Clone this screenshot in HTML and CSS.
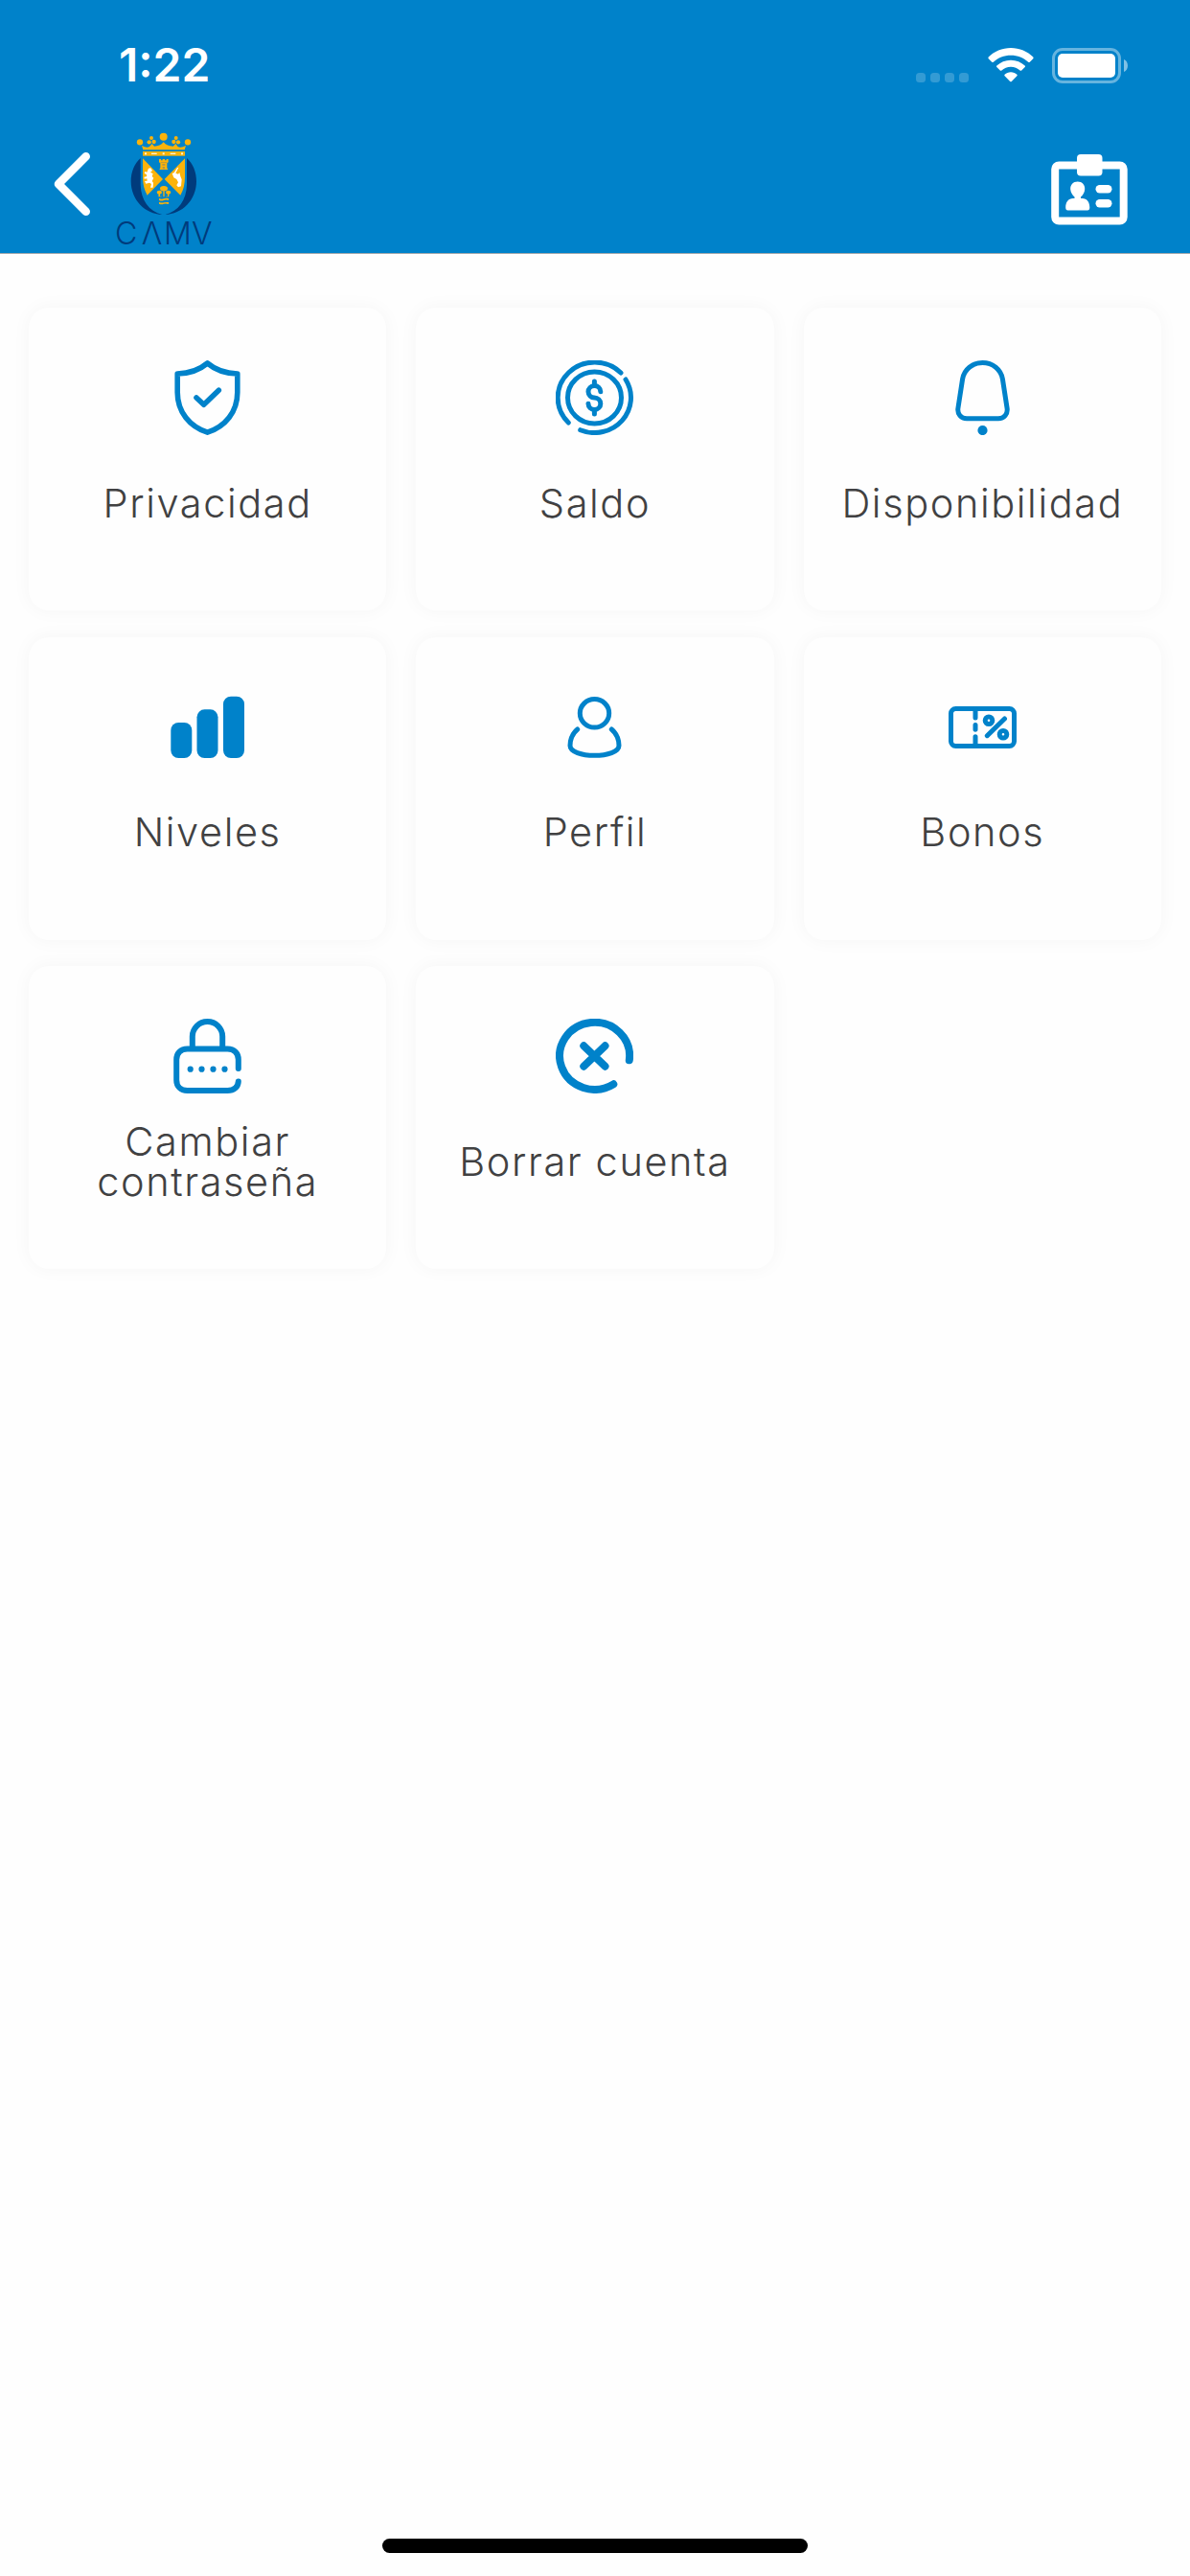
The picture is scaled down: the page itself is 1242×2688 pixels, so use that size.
FILE: index.html
```html
<!DOCTYPE html>
<html lang="es">
<head>
    <meta charset="UTF-8">
    <meta name="viewport" content="width=device-width, initial-scale=1.0">
    <title>CAMV</title>
    <link rel="stylesheet" href="styles.css">
</head>
<body>
    <header class="header">
        <div class="status-bar">
            <span class="time">1:22</span>
            <div class="status-icons">
                <div class="signal">
                    <span></span><span></span><span></span><span></span>
                </div>
                <svg class="wifi" viewBox="0 0 48 36" fill="#fff">
                    <path d="M24 0C33 0 41.500 3.600 47.300 9.600Q48 10.400 47.300 11.200L43.800 14.700Q43 15.400 42.200 14.700C37.300 10.200 31 7.700 24 7.700S10.700 10.200 5.800 14.700Q5 15.400 4.200 14.700L.7 11.200Q0 10.400.7 9.600C6.500 3.600 15 0 24 0Z"/>
                    <path d="M24 12.700C29.700 12.700 34.900 14.900 38.700 18.500Q39.500 19.300 38.700 20.100L35.200 23.500Q34.400 24.200 33.600 23.500C31 21.200 27.700 19.800 24 19.800S17 21.200 14.400 23.500Q13.600 24.200 12.800 23.500L9.300 20.100Q8.500 19.300 9.300 18.500C13.100 14.900 18.300 12.700 24 12.700Z"/>
                    <path d="M24 25.300C26.500 25.300 28.700 26.200 30.400 27.700Q31.200 28.500 30.400 29.300L24.800 35Q24 35.700 23.200 35L17.600 29.300Q16.800 28.500 17.600 27.700C19.300 26.200 21.500 25.300 24 25.300Z"/>
                </svg>
                <svg class="battery" viewBox="0 0 80 37">
                    <rect x="1.500" y="1.500" width="69" height="34" rx="9.500" fill="none" stroke="#fff" stroke-width="3" opacity=".4"/>
                    <rect x="6" y="6" width="60" height="25" rx="5" fill="#fff"/>
                    <path d="M75 12C80.300 14 80.300 23 75 25Z" fill="#fff" opacity=".5"/>
                </svg>
            </div>
        </div>

        <div class="nav-bar">
            <svg class="back" viewBox="0 0 38 66">
                <path d="M33.700 4.300L5 33L33.700 61.700" fill="none" stroke="#fff" stroke-width="8.600" stroke-linecap="round" stroke-linejoin="round"/>
            </svg>

            <svg class="logo" viewBox="60 20 312 366">
                <!-- corona -->
                <g fill="#fbb30a">
                    <circle cx="212" cy="40" r="12"/>
                    <circle cx="138" cy="57" r="9.500"/>
                    <circle cx="288" cy="57" r="9.500"/>
                    <circle cx="174" cy="44" r="6"/>
                    <circle cx="167" cy="57" r="6.500"/>
                    <circle cx="182" cy="56" r="6.500"/>
                    <circle cx="251" cy="44" r="6"/>
                    <circle cx="244" cy="56" r="6.500"/>
                    <circle cx="258" cy="57" r="6.500"/>
                    <path d="M144 68Q160 76 168 71L176 62L183 70Q201 70 212 57Q223 70 242 70L250 62L257 71Q266 76 282 68L278 81H148Z"/>
                    <rect x="147" y="86" width="132" height="14"/>
                </g>
                <g fill="#fff3d6">
                    <rect x="153" y="90" width="6" height="6"/>
                    <rect x="174" y="91" width="17" height="4"/>
                    <rect x="209" y="90" width="6" height="6"/>
                    <rect x="233" y="91" width="17" height="4"/>
                    <rect x="267" y="90" width="6" height="6"/>
                </g>
                <!-- laureles -->
                <path d="M140 107V190C142 240 165 271 208 284C155 283 110 238 110 180C110 150 121 124 140 107Z" fill="#003b7c"/>
                <path d="M285 107V190C283 240 260 271 217 284C270 283 315 238 315 180C315 150 304 124 285 107Z" fill="#003b7c"/>
                <!-- escudo -->
                <path d="M147 108L210 173L161 223Q147 200 147 165Z" fill="#fbb30a"/>
                <path d="M279 108L215 173L265 223Q279 200 279 165Z" fill="#fbb30a"/>
                <g fill="#fff">
                    <path d="M165 139L172 138L177 146L171 151L179 156L176 164L181 169L176 179L180 184L179 199H171L174 188L168 184L157 187L153 179L161 178L160 171L152 172L151 166L160 164L158 157L152 155L154 149L160 151Z"/>
                    <path d="M239 155L245 153L255 137L259 136L250 154L258 157L262 152L265 164L269 174L267 195L258 198L253 192L258 183L253 173L244 168Z"/>
                </g>
                <path d="M198 110H204V114H209V110H216V114H221V110H227V120L223 123V138L226 143H199L202 138V123L198 120Z" fill="#fbb30a"/>
                <path d="M208 125H217V130H208ZM209 134H216V141H209ZM203 119H222V121H203Z" fill="#b19743"/>
                <g fill="#fbb30a">
                    <ellipse cx="213" cy="202" rx="12" ry="8"/>
                    <ellipse cx="199" cy="214" rx="8" ry="6"/>
                    <ellipse cx="227" cy="214" rx="8" ry="6"/>
                    <path d="M211 207H215V228H211ZM197 216H201V226H206V228H196ZM225 216H229V228H219V226H225Z"/>
                    <path d="M198 233Q206 237 213 234Q220 231 228 233V239Q220 236 213 239Q206 242 198 239ZM198 244Q206 248 213 246Q220 244 228 245V251Q220 248 213 250Q206 253 198 250Z"/>
                </g>
                <text class="logo-text" x="60 143 213 300" y="377">CΛMV</text>
            </svg>

            <svg class="badge" viewBox="0 0 80 74">
                <rect x="4.200" y="11.500" width="71.500" height="58" rx="4" fill="none" stroke="#fff" stroke-width="8"/>
                <g fill="#fff">
                    <rect x="27" y="0" width="26.500" height="22.500" rx="4"/>
                    <path d="M27.700 28.500C32.500 28.500 35.500 32 35.200 36.500C35 40 33.200 42.500 31 44.500V46H32.500C37.500 46 40.300 50 40.300 55.500Q40.300 58.500 38 58.500H17.500Q15.200 58.500 15.200 55.500C15.200 50 18 46 23 46H24.500V44.500C22.300 42.500 20.500 40 20.200 36.500C20 32 23 28.500 27.700 28.500Z"/>
                    <rect x="46.500" y="32" width="17" height="8.500" rx="4.200"/>
                    <rect x="46.500" y="47" width="17" height="8.500" rx="4.200"/>
                </g>
            </svg>
        </div>
    </header>

    <main class="menu">
        <a class="card">
            <svg class="icon" viewBox="0 0 81 78">
                <path stroke-width="5.600" d="M40.500 3C31 11 21.500 13.700 9.200 14V33.500C9.200 54 22 69 40.500 75.200C59 69 71.800 54 71.800 33.500V14C59.500 13.700 50 11 40.500 3Z"/>
                <path stroke-width="5.600" d="M29 39L36.700 46.300L52.300 31.300"/>
            </svg>
            <span class="label">Privacidad</span>
        </a>
        <a class="card">
            <svg class="icon" viewBox="0 0 81 78">
                <path d="M13.300 65A38.100 36.600 0 0 1 68 13"/>
                <path d="M73 20A38.100 36.600 0 0 1 25.700 72.700"/>
                <ellipse cx="40.500" cy="39" rx="28" ry="27"/>
                <path d="M46.800 32.700A6.400 6.200 0 1 0 40.400 39A6.400 6.200 0 1 1 34 45.300M40.400 22V26.500M40.400 51.500V56"/>
            </svg>
            <span class="label">Saldo</span>
        </a>
        <a class="card">
            <svg class="icon" viewBox="0 0 81 78">
                <path d="M19.600 19.500C21.300 9.500 30 2.500 40.500 2.500S59.700 9.500 61.400 19.500L66.100 50C67 56 63 60.700 57 60.700H24C18 60.700 14 56 14.900 50Z"/>
                <circle class="solid" cx="40.500" cy="73" r="5.100"/>
            </svg>
            <span class="label">Disponibilidad</span>
        </a>
        <a class="card">
            <svg class="icon" viewBox="0 0 81 78">
                <rect class="solid" x="2.300" y="34" width="22" height="37" rx="8"/>
                <rect class="solid" x="29.500" y="20.300" width="22" height="50.700" rx="8"/>
                <rect class="solid" x="57" y="6.700" width="22" height="64.300" rx="8"/>
            </svg>
            <span class="label">Niveles</span>
        </a>
        <a class="card">
            <svg class="icon" viewBox="0 0 81 78">
                <ellipse cx="40.500" cy="24.300" rx="15.200" ry="14.800"/>
                <path d="M22.700 41C18 45 15 51.500 15 58C15 64.500 27 68.300 40.500 68.300S66 64.500 66 58C66 51.500 63 45 58.300 41"/>
            </svg>
            <span class="label">Perfil</span>
        </a>
        <a class="card">
            <svg class="icon" viewBox="0 0 81 78">
                <rect x="7.500" y="19.500" width="66" height="39" rx="5"/>
                <path d="M33 20V29M33 36.500V41.200M33 48.800V58"/>
                <circle cx="47" cy="31.700" r="3.800"/>
                <circle cx="62" cy="46.300" r="3.800"/>
                <path d="M63.500 30L45.300 47.700"/>
            </svg>
            <span class="label">Bonos</span>
        </a>
        <a class="card">
            <svg class="icon" viewBox="0 0 81 78">
                <path stroke-width="6" d="M72.800 52V42.500C72.800 36 68.500 31.400 61.500 31.400H19.500C12.500 31.400 8.200 36 8.200 42.500V64C8.200 70.500 12.500 75 19.500 75H61.500C68 75 72.500 71.500 72.800 65.500M24.800 30V18.500A15.700 15.500 0 0 1 56.200 18.500V30"/>
                <circle class="solid" cx="22.700" cy="52.700" r="3.100"/>
                <circle class="solid" cx="34.500" cy="52.700" r="3.100"/>
                <circle class="solid" cx="46.500" cy="52.700" r="3.100"/>
                <circle class="solid" cx="58.500" cy="52.700" r="3.100"/>
            </svg>
            <span class="label">Cambiar contraseña</span>
        </a>
        <a class="card">
            <svg class="icon icon-bold" viewBox="0 0 81 78">
                <path d="M76.800 43.300A36.500 35 0 1 0 60.300 68.300"/>
                <path d="M29.300 28.300L51.500 49.700M51.500 28.300L29.300 49.700"/>
            </svg>
            <span class="label">Borrar cuenta</span>
        </a>
    </main>

    <div class="home-indicator"></div>
</body>
</html>
```
FILE: styles.css
```css
* {
    box-sizing: border-box;
}

body {
    margin: 0;
    min-height: 2688px;
    display: flex;
    flex-direction: column;
    background-color: #fefefe;
    font-family: "Inter", sans-serif;
    color: #414142;
}

svg {
    display: block;
    flex: none;
}

.header {
    height: 265px;
    background-color: #0082ca;
    border-bottom: 1px solid #a3a9ad;
}

/* Barra de estado */
.status-bar {
    height: 136px;
    padding: 0 64px 0 124px;
    display: flex;
    justify-content: space-between;
    align-items: center;
}

.time {
    color: #fff;
    font-size: 48px;
    font-weight: 600;
    line-height: 56px;
}

.status-icons {
    display: flex;
    align-items: flex-end;
}

.signal {
    display: flex;
    gap: 5px;
    margin: 0 20px 1px 0;
}

.signal span {
    width: 10px;
    height: 10px;
    border-radius: 3.500px;
    background-color: rgba(255, 255, 255, 0.2);
}

.wifi {
    width: 48px;
    height: 36px;
    margin: 0 19px 1px 0;
}

.battery {
    width: 80px;
    height: 37px;
}

/* Navegación */
.nav-bar {
    height: 128px;
    padding: 0 65px 0 56px;
    display: flex;
    align-items: flex-start;
}

.back {
    width: 38px;
    height: 66px;
    margin-top: 23px;
}

.logo {
    width: 104px;
    height: 122px;
    margin-left: 26px;
    overflow: visible;
}

.logo-text {
    font-weight: 300;
    font-size: 96px;
    fill: #003b7c;
}

.badge {
    width: 80px;
    height: 74px;
    margin: 25px 0 0 auto;
}

/* Tarjetas */
.menu {
    display: grid;
    grid-template-columns: repeat(3, 1fr);
    grid-auto-rows: 316px;
    gap: 27.700px 31px;
    padding: 56px 30px;
}

.card {
    display: flex;
    flex-direction: column;
    align-items: center;
    padding: 55px 20px 0;
    border-radius: 21px;
    background-color: #fefefe;
    box-shadow: 0 0 20px rgba(0, 0, 0, 0.04);
}

.icon {
    width: 81px;
    height: 78px;
    fill: none;
    stroke: #0082ca;
    stroke-width: 5;
    stroke-linecap: round;
    stroke-linejoin: round;
}

.icon-bold {
    stroke-width: 8;
}

.icon .solid {
    fill: #0082ca;
    stroke: none;
}

.label {
    height: 141px;
    display: flex;
    align-items: center;
    text-align: center;
    font-size: 41.500px;
    font-weight: 350;
    line-height: 42px;
    letter-spacing: 1.600px;
}

.home-indicator {
    width: 444px;
    height: 15px;
    margin: auto auto 24px;
    border-radius: 8px;
    background-color: #000;
}
```
